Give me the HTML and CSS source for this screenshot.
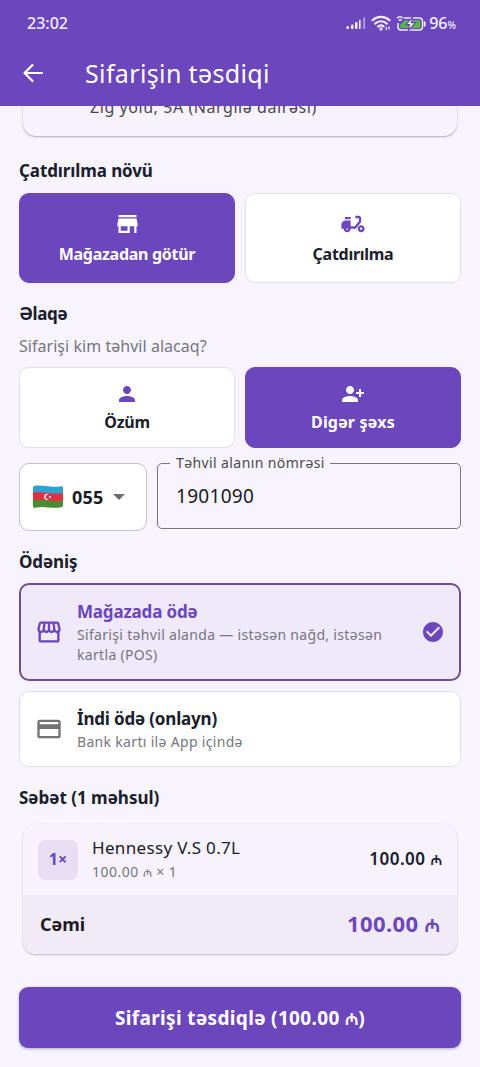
FILE: index.html
```html
<!DOCTYPE html>
<html lang="az">
<head>
<meta charset="utf-8">
<meta name="viewport" content="width=device-width">
<title>Sifarişin təsdiqi</title>
<link rel="stylesheet" href="styles.css">
</head>
<body>
<header class="top">
  <div class="status">
    <span class="clock">23:02</span>
    <div class="indicators">
      <svg class="signal" width="20" height="14" viewBox="0 0 20 14" fill="#f3ecfb"><circle cx="1.7" cy="11.6" r="1.5"/><rect x="5" y="8.500" width="2.500" height="4.500" rx="1"/><rect x="9" y="6" width="2.500" height="7" rx="1"/><g opacity=".45"><rect x="13" y="3.500" width="2.200" height="9.500" rx="1"/><rect x="17" y="1" width="2.200" height="12" rx="1"/></g><rect x="13" y="4" width="1.200" height="9" rx=".6"/></svg>
      <svg class="wifi" width="20" height="16" viewBox="0 0 20 16" fill="none" stroke="#f3ecfb" stroke-width="2.200" stroke-linecap="round"><path d="M1.500 5.200a12.400 12.400 0 0 1 17 0M4.200 8.600a8.300 8.300 0 0 1 11.600 0M7 11.600a4.500 4.500 0 0 1 5.600-.2"/><circle cx="10" cy="14" r=".6"/><path d="M15.300 12.500v2M18 12v2" stroke-width="1.300"/></svg>
      <svg class="battery" width="31" height="17" viewBox="0 0 31 17"><path d="M8 3h15.500a3 3 0 0 1 3 3v6a3 3 0 0 1-3 3H5a3 3 0 0 1-3-3V8" fill="none" stroke="#f3ecfb" stroke-width="1.500"/><path d="M9 5.200h15.200v7.800H4.200V10z" fill="#58b548"/><path d="M28.700 7.200v3.600" stroke="#f3ecfb" stroke-width="1.800" stroke-linecap="round"/><path d="M16.300 2.400 10 9.700h3.600l-1.300 5.900 7-7.900h-3.900l1.300-5.300z" fill="#fff" stroke="#6b46bc" stroke-width="1.200"/><path d="M1 3.300Q4 .2 7 3.300M2.600 5.600q1.500-1.600 3 0" fill="none" stroke="#f3ecfb" stroke-width="1.500"/></svg>
      <span class="percent">96<small>%</small></span>
    </div>
  </div>
  <div class="bar">
    <svg class="back" width="22" height="22" viewBox="0 0 22 22" fill="none" stroke="#fff" stroke-width="2.200" stroke-linecap="round" stroke-linejoin="round"><path d="M20 11H3M10.500 3 2.500 11l8 8"/></svg>
    <h1 class="title">Sifarişin təsdiqi</h1>
  </div>
</header>
<main class="content">
  <div class="address"><span class="address-text">Zığ yolu, 5A (Nargilə dairəsi)</span></div>

  <h2 class="heading h-delivery">Çatdırılma növü</h2>
  <div class="choices tall">
    <div class="choice active">
      <svg width="27" height="28" viewBox="0 0 24 24" fill="currentColor"><path d="M20 4H4v2h16V4zm1 10v-2l-1-5H4l-1 5v2h1v6h10v-6h4v6h2v-6h1zm-9 4H6v-4h6v4z"/></svg>
      <span class="label l-pickup">Mağazadan götür</span>
    </div>
    <div class="choice">
      <svg width="28" height="28" viewBox="0 0 24 24" fill="currentColor"><path d="M19 7c0-1.100-.9-2-2-2h-3v2h3v2.650L13.520 14H10V9H6c-2.210 0-4 1.790-4 4v3h2c0 1.660 1.340 3 3 3s3-1.340 3-3h4.480L19 10.350V7zM7 17c-.55 0-1-.45-1-1h2c0 .55-.45 1-1 1z"/><path d="M5 6h5v2H5zM19 13c-1.660 0-3 1.340-3 3s1.340 3 3 3 3-1.340 3-3-1.340-3-3-3zm0 4c-.55 0-1-.45-1-1s.45-1 1-1 1 .45 1 1-.45 1-1 1z"/></svg>
      <span class="label l-courier">Çatdırılma</span>
    </div>
  </div>

  <h2 class="heading h-contact">Əlaqə</h2>
  <p class="question">Sifarişi kim təhvil alacaq?</p>
  <div class="choices">
    <div class="choice">
      <svg width="24" height="24" viewBox="0 0 24 24" fill="currentColor"><path d="M12 12c2.210 0 4-1.790 4-4s-1.790-4-4-4-4 1.790-4 4 1.790 4 4 4zm0 2c-2.670 0-8 1.340-8 4v2h16v-2c0-2.660-5.330-4-8-4z"/></svg>
      <span class="label l-self">Özüm</span>
    </div>
    <div class="choice active">
      <svg width="24" height="24" viewBox="0 0 24 24" fill="currentColor"><path d="M9 12c2.210 0 4-1.790 4-4s-1.790-4-4-4-4 1.790-4 4 1.790 4 4 4zm0 2c-2.670 0-8 1.340-8 4v2h16v-2c0-2.660-5.330-4-8-4zm11-4V7h-2v3h-3v2h3v3h2v-3h3v-2z"/></svg>
      <span class="label l-other">Digər şəxs</span>
    </div>
  </div>

  <div class="phone">
    <div class="prefix">
      <svg width="32" height="24" viewBox="0 0 32 24"><defs><clipPath id="wave"><path d="M1 2.200Q1 1 3 .8C12-.2 18 3 29 1.200Q31 1 31 2.300V20.500Q31 22 29 22.300C20 24 12 20.500 3 22.700Q1 23 1 21.700z"/></clipPath></defs><g clip-path="url(#wave)"><path fill="#2ba4d2" d="M0 0h32v9H0z"/><path fill="#e52f3f" d="M0 7.500C10 6 20 10 32 7.700V16H0z"/><path fill="#4a8c31" d="M0 15c10-1.500 20 2.500 32 .2V24H0z"/></g><path d="M17 9.600a3 3 0 1 0 0 4.600 2.500 2.500 0 1 1 0-4.600z" fill="#fff"/><circle cx="18" cy="12" r="1.100" fill="#fff"/></svg>
      <span class="code">055</span>
      <svg width="12" height="6" viewBox="0 0 12 6"><path d="M0 0h12L6 6z" fill="#6d6b70"/></svg>
    </div>
    <fieldset class="number">
      <legend class="number-label">Təhvil alanın nömrəsi</legend>
      <span class="number-value">1901090</span>
    </fieldset>
  </div>

  <h2 class="heading h-payment">Ödəniş</h2>
  <div class="payment selected">
    <svg class="pay-icon" width="28" height="28" viewBox="0 0 24 24" fill="currentColor"><path d="M21.900 8.890l-1.050-4.370c-.22-.9-1-1.520-1.910-1.520H5.050c-.9 0-1.690.63-1.900 1.520L2.100 8.890c-.24 1.020-.02 2.060.62 2.880.08.110.19.190.28.290V19c0 1.100.9 2 2 2h14c1.100 0 2-.9 2-2v-6.940c.09-.09.2-.18.280-.28.64-.82.870-1.870.620-2.890zM18.910 4.990l1.050 4.370c.1.420.01.840-.25 1.170-.14.180-.44.470-.94.470-.61 0-1.140-.49-1.210-1.140L16.980 5l1.930-.01zM13 5h1.960l.54 4.520c.05.390-.07.780-.33 1.070-.22.260-.54.410-.95.410-.67 0-1.220-.59-1.220-1.310V5zM8.490 9.520L9.040 5H11v4.690c0 .72-.55 1.310-1.290 1.310-.34 0-.65-.15-.89-.41a1.420 1.420 0 0 1-.33-1.070zM4.040 9.360L5.050 5h1.970l-.58 4.860c-.08.650-.6 1.140-1.210 1.140-.49 0-.8-.29-.93-.47-.27-.32-.36-.75-.26-1.170zM5 19v-6.030c.08.010.15.030.23.030.87 0 1.660-.36 2.240-.95.6.6 1.400.95 2.310.95.870 0 1.650-.36 2.230-.93.590.57 1.390.930 2.290.930.840 0 1.640-.35 2.240-.95.580.59 1.370.95 2.240.95.080 0 .15-.02.230-.03V19H5z"/></svg>
    <div class="pay-text">
      <span class="pay-title p-store">Mağazada ödə</span>
      <span class="pay-note n-store">Sifarişi təhvil alanda — istəsən nağd, istəsən<br>kartla (POS)</span>
    </div>
    <svg class="tick" width="24" height="24" viewBox="0 0 24 24" fill="currentColor"><path d="M12 2C6.480 2 2 6.480 2 12s4.480 10 10 10 10-4.480 10-10S17.520 2 12 2zm-2 15l-5-5 1.410-1.410L10 14.170l7.590-7.590L19 8l-9 9z"/></svg>
  </div>
  <div class="payment">
    <svg class="pay-icon" width="28" height="28" viewBox="0 0 24 24" fill="#737175"><path d="M20 4H4c-1.110 0-1.990.89-1.990 2L2 18c0 1.110.89 2 2 2h16c1.110 0 2-.89 2-2V6c0-1.110-.89-2-2-2zm0 14H4v-6h16v6zm0-10H4V6h16v2z"/></svg>
    <div class="pay-text">
      <span class="pay-title p-online">İndi ödə (onlayn)</span>
      <span class="pay-note n-online">Bank kartı ilə App içində</span>
    </div>
  </div>

  <h2 class="heading h-cart">Səbət (1 məhsul)</h2>
  <div class="cart">
    <div class="item">
      <span class="qty">1×</span>
      <div class="item-text">
        <span class="item-name">Hennessy V.S 0.7L</span>
        <span class="item-note">100.00 <span class="azn">₼</span> × 1</span>
      </div>
      <span class="item-price">100.00 <span class="azn">₼</span></span>
    </div>
    <div class="total">
      <span class="total-label">Cəmi</span>
      <span class="total-price">100.00 <span class="azn">₼</span></span>
    </div>
  </div>
  <button class="submit">Sifarişi təsdiqlə (100.00 <span class="azn">₼</span>)</button>
</main>
</body>
</html>
```
FILE: styles.css
```css
* { box-sizing: border-box; }
body {
  margin: 0;
  height: 1067px;
  overflow: hidden;
  background: #f7f4fe;
  color: #19202b;
  font-family: "Noto Sans", sans-serif;
}
svg { display: block; flex: none; }
h1, h2, p { margin: 0; }

.top { height: 106px; background: #6b46bc; color: #fff; }
.status {
  height: 46px;
  padding: 0 24px 0 27px;
  display: flex;
  align-items: center;
  justify-content: space-between;
  color: #f6f0fd;
}
.clock { font-size: 16px; font-weight: 500; }
.indicators { display: flex; align-items: center; }
.wifi { margin-left: 5px; }
.battery { margin-left: 5px; }
.percent { margin-left: 2px; font-size: 16px; font-weight: 500; }
.percent small { font-size: 10px; }
.bar { height: 54px; padding-left: 22px; display: flex; align-items: center; gap: 41px; }
.title { margin-top: -1px; font-size: 25px; line-height: 32px; font-weight: 400; letter-spacing: .36px; }

.content { height: 961px; padding: 0 19px; overflow: hidden; }
.address {
  height: 130px;
  margin: -100px 4px 0;
  padding: 89px 0 0 67px;
  border-radius: 13px;
  background: #f7f2fb;
  box-shadow: 0 1px 2px rgba(0, 0, 0, .3);
}
.address-text { display: block; font-size: 16px; line-height: 24px; letter-spacing: .56px; color: #49474e; white-space: nowrap; }

.heading { margin: 19px 0 10px; font-size: 17px; line-height: 24px; font-weight: 700; letter-spacing: -.1px; white-space: nowrap; }
.h-delivery { margin-top: 23px; }
.h-contact { margin-bottom: 9px; letter-spacing: -.35px; }
.h-payment { margin-bottom: 9px; }
.h-cart { margin-bottom: 14px; letter-spacing: 0; }
.question { height: 22px; margin-bottom: 10px; font-size: 16px; line-height: 22px; letter-spacing: .04px; color: #77757e; }

.choices { height: 81px; display: grid; grid-template-columns: 1fr 1fr; gap: 10px; }
.choices.tall { height: 90px; }
.choice {
  display: flex;
  flex-direction: column;
  align-items: center;
  justify-content: center;
  gap: 4px;
  border: 1px solid #e2dfe9;
  border-radius: 10px;
  background: #fff;
  color: #6b46bc;
}
.choice.active { background: #6b46bc; border-color: #6b46bc; color: #fff; }
.label { font-size: 16px; line-height: 24px; font-weight: 700; letter-spacing: -.28px; color: #19202b; }
.l-other { letter-spacing: .15px; }
.active .label { color: #fff; }

.phone { height: 68px; margin-top: 15px; display: grid; grid-template-columns: 128px 1fr; gap: 10px; }
.prefix {
  display: flex;
  align-items: center;
  padding-left: 12px;
  border: 1px solid #c3c1c9;
  border-radius: 10px;
  background: #fff;
}
.code { margin: 0 9px 0 8px; font-size: 18px; font-weight: 700; letter-spacing: .2px; color: #1b1a1f; }
.number {
  height: 76px;
  min-width: 0;
  margin: -10px 0 0;
  padding: 0 0 0 18px;
  border: 1px solid #77747e;
  border-radius: 5px;
}
.number-label { margin-left: -6px; padding: 0 5px 0 6px; font-size: 14px; line-height: 20px; letter-spacing: .4px; color: #4b4951; }
.number-value { display: block; margin-top: 9px; font-size: 19px; line-height: 28px; letter-spacing: .3px; color: #1b1a1f; }

.payment {
  height: 76px;
  padding: 0 15px;
  display: flex;
  align-items: center;
  border: 1px solid #e2dfe9;
  border-radius: 10px;
  background: #fff;
}
.payment.selected {
  height: 98px;
  margin-bottom: 10px;
  padding: 0 14px;
  border: 2px solid #6c4c9b;
  background: #efe9f9;
  color: #6b46bc;
}
.pay-text { flex: 1; margin-left: 14px; white-space: nowrap; }
.pay-title { display: block; margin-top: -1px; font-size: 17px; line-height: 26px; font-weight: 700; letter-spacing: -.18px; }
.pay-note { display: block; font-size: 14px; line-height: 20px; letter-spacing: .32px; color: #77757e; }

.cart {
  height: 130px;
  margin: 0 4px 33px;
  border-radius: 13px;
  overflow: hidden;
  background: #f7f2fb;
  box-shadow: 0 1px 2px rgba(0, 0, 0, .25);
}
.item { height: 71px; padding: 0 15px; display: flex; align-items: center; }
.qty {
  width: 40px;
  height: 40px;
  border-radius: 8px;
  background: #e9dff5;
  color: #6b46bc;
  font-size: 16px;
  line-height: 38px;
  font-weight: 700;
  text-align: center;
}
.item-text { flex: 1; margin-left: 14px; }
.item-name { display: block; margin-top: -1px; font-size: 17px; line-height: 26px; letter-spacing: .33px; }
.item-note { display: block; font-size: 14px; line-height: 22px; letter-spacing: .5px; color: #77757e; }
.item-price { margin-top: -2px; font-size: 17px; font-weight: 600; letter-spacing: .5px; }
.azn { font-size: .8em; letter-spacing: 0; }
.total {
  height: 59px;
  padding: 0 17px;
  display: flex;
  align-items: center;
  justify-content: space-between;
  background: #f1eaf7;
}
.total-label { margin-top: -2px; font-size: 18px; font-weight: 700; color: #1b1a1f; }
.total-price { margin-top: -4px; font-size: 22px; font-weight: 700; letter-spacing: .4px; color: #6b46bc; }
.submit {
  display: block;
  width: 100%;
  height: 61px;
  padding: 0;
  border: 0;
  border-radius: 9px;
  background: #6b46bc;
  box-shadow: 0 1px 3px rgba(0, 0, 0, .3);
  color: #fff;
  font: 700 19px "Noto Sans", sans-serif;
  letter-spacing: .34px;
}
```
